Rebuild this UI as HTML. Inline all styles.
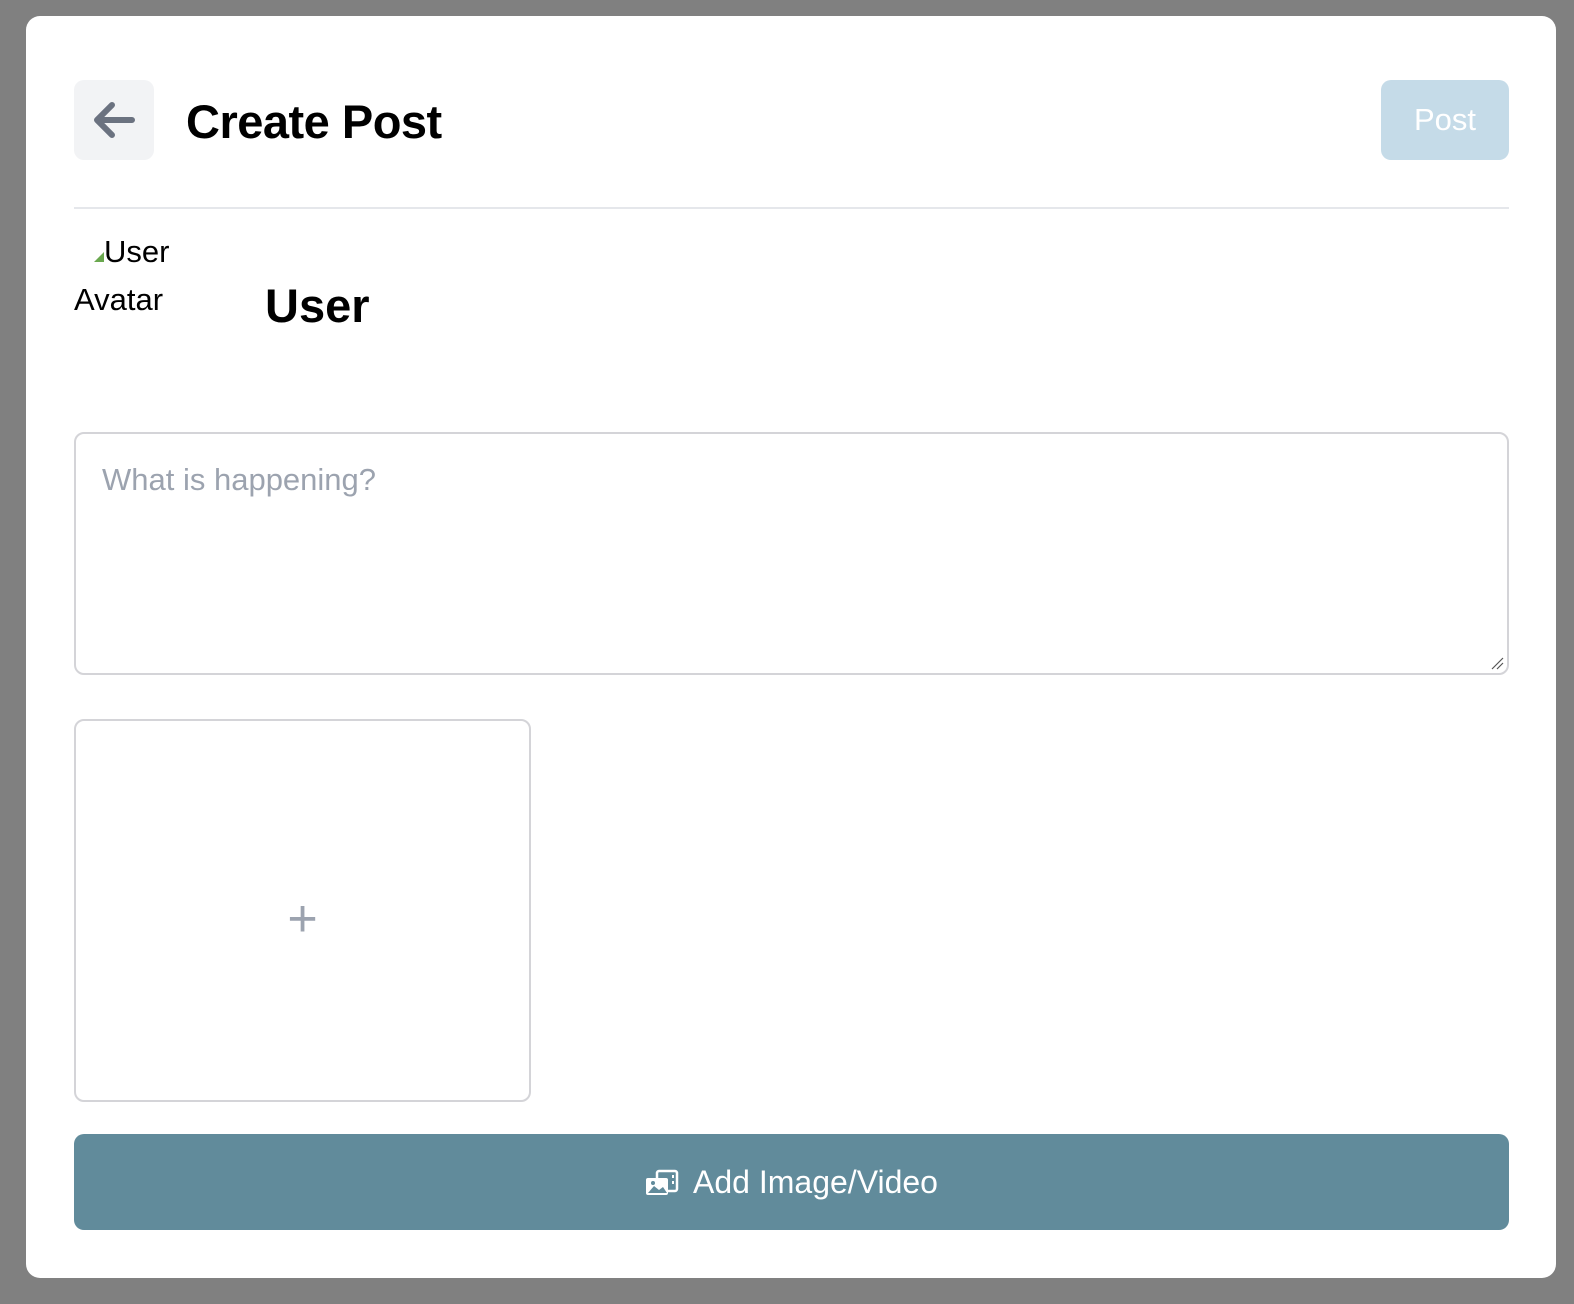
<!DOCTYPE html>
<html><head><meta charset="utf-8"><style>
*{box-sizing:border-box;margin:0;padding:0}
html,body{width:1574px;height:1304px;background:#808080;overflow:hidden;font-family:"Liberation Sans",sans-serif}
.card{position:absolute;left:26px;top:16px;width:1530px;height:1262px;background:#fff;border-radius:14px}
.back{position:absolute;left:48px;top:64px;width:80px;height:80px;background:#f2f3f5;border-radius:10px}
.title{position:absolute;left:160px;top:78px;font-size:47px;font-weight:bold;color:#000;letter-spacing:-0.5px}
.post{position:absolute;left:1355px;top:64px;width:128px;height:80px;background:#c5dbe8;border-radius:10px;color:#fff;font-size:31px;text-align:center;line-height:80px}
.hr{position:absolute;left:48px;top:191px;width:1435px;height:2px;background:#e5e7eb}
.av{position:absolute;left:48px;top:212px;width:110px;font-size:31px;line-height:48px;color:#000}
.uname{position:absolute;left:239px;top:262px;font-size:47px;font-weight:bold;color:#000}
.ta{position:absolute;left:48px;top:416px;width:1435px;height:243px;border:2px solid #d4d4d8;border-radius:10px}
.ph{position:absolute;left:26px;top:28px;font-size:31px;color:#9ca3af}
.up{position:absolute;left:48px;top:703px;width:457px;height:383px;border:2px solid #d4d4d8;border-radius:10px}
.plus{position:absolute;left:0;right:0;top:168px;text-align:center;font-size:52px;color:#9ca3af;font-weight:300}
.add{position:absolute;left:48px;top:1118px;width:1435px;height:96px;background:#618b9b;border-radius:10px;color:#fff;font-size:32px;text-align:center;line-height:96px}
</style></head><body>
<div class="card">
<div class="back"><svg width="80" height="80" viewBox="0 0 80 80"><path d="M58 40H24M38 25L23 40L38 55" fill="none" stroke="#6b7280" stroke-width="6" stroke-linecap="round" stroke-linejoin="round"/></svg></div>
<div class="title">Create Post</div>
<div class="post">Post</div>
<div class="hr"></div>
<div class="av"><span style="display:inline-block;width:0;height:0;border-left:10px solid transparent;border-bottom:10px solid #6aa84f;margin-left:20px"></span>User<br>Avatar</div>
<div class="uname">User</div>
<div class="ta"><div class="ph">What is happening?</div>
<svg style="position:absolute;right:2px;bottom:2px" width="16" height="16"><path d="M3 14L14 3M8 14L14 8" stroke="#555" stroke-width="1.2"/></svg></div>
<div class="up"><div class="plus">+</div></div>
<div class="add"><svg width="34" height="28" viewBox="0 0 34 28" style="vertical-align:-4px;margin-right:14px"><rect x="12" y="2" width="20" height="20" rx="2" fill="none" stroke="#fff" stroke-width="2.5"/><path d="M28 6v3M28 12v3" stroke="#fff" stroke-width="2"/><rect x="1" y="9" width="22" height="17" rx="2" fill="#fff"/><path d="M3 24l6-7 5 4 4-3 4 6z" fill="#618b9b"/><circle cx="8" cy="14" r="2" fill="#618b9b"/></svg>Add Image/Video</div>
</div>
</body></html>
